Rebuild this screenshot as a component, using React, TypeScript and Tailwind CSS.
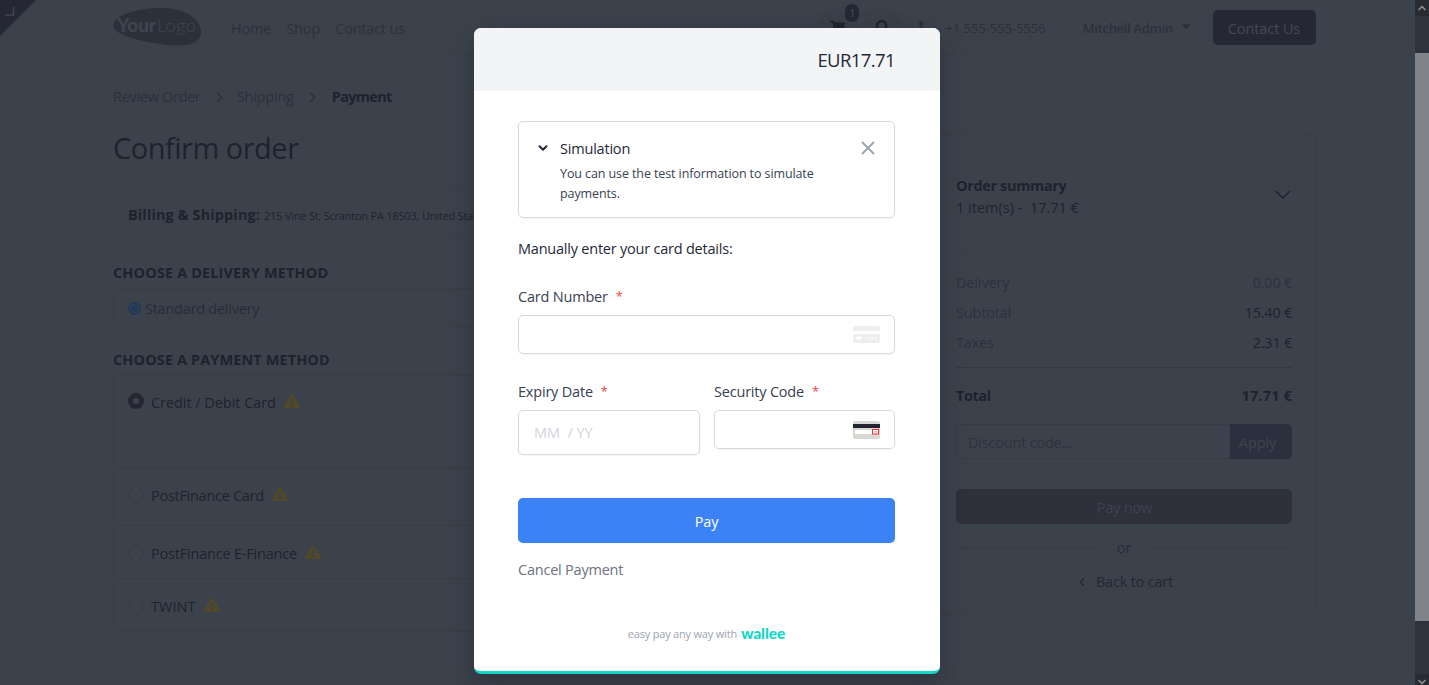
import { ChevronDown, ChevronLeft, ChevronRight, ChevronUp, X } from 'lucide-react';
import { FaCaretDown, FaExclamationTriangle, FaPhoneAlt, FaSearch, FaShoppingCart } from 'react-icons/fa';

interface PaymentMethod {
  name: string;
  nameClass: string;
  rowClass: string;
  selected?: boolean;
}

const paymentMethods: PaymentMethod[] = [
  { name: 'Credit / Debit Card', nameClass: 'tracking-[-0.05px]', rowClass: 'h-[92px] pt-[13px]', selected: true },
  { name: 'PostFinance Card', nameClass: 'tracking-[-0.28px]', rowClass: 'h-[57px] pt-[13px] border-t' },
  { name: 'PostFinance E-Finance', nameClass: 'tracking-[-0.2px]', rowClass: 'h-[53px] pt-[14px] border-t' },
  { name: 'TWINT', nameClass: 'tracking-[0.05px]', rowClass: 'h-[53px] pt-[14px] border-t' },
];

const totals = [
  { label: 'Delivery', value: '0.00 €', valueClass: 'text-[#2b313c]' },
  { label: 'Subtotal', value: '15.40 €', valueClass: 'text-[#1c222e]' },
  { label: 'Taxes', value: '2.31 €', valueClass: 'text-[#1c222e]' },
];

function Logo() {
  return (
    <svg className="w-[89px] h-[38px] shrink-0" viewBox="0 0 89 38">
      <path
        d="M0 17 C1 7 24 0 49 0 C72 0 88 11 88 24 C88 33 79 37.5 65 37.5 C42 37 0 29 0 17 Z"
        fill="#2b313b"
      />
      <text x="4" y="24" fontFamily="Lato" fontWeight="900" fontSize="18" textLength="39" lengthAdjust="spacingAndGlyphs" fill="#3f454f">
        Your
      </text>
      <text x="44" y="24" fontFamily="Lato" fontWeight="300" fontSize="18" textLength="39" lengthAdjust="spacingAndGlyphs" fill="#3f454f">
        Logo
      </text>
    </svg>
  );
}

function Navbar() {
  return (
    <header className="h-[55px] border-b border-[#393e48] pl-[113px] pr-[99px] flex items-center justify-between text-[#2b313b]">
      <div className="flex items-center">
        <Logo />
        <nav className="flex items-center ml-[29px] gap-[15px] pt-[3px]">
          <span className="tracking-[-0.2px]">Home</span>
          <span className="tracking-[-0.1px]">Shop</span>
          <span className="tracking-[-0.2px]">Contact us</span>
        </nav>
      </div>
      <div className="flex items-center">
        <div className="relative size-10 rounded-full bg-[#3a4049] flex items-center justify-center text-[#1d232e]">
          <FaShoppingCart className="size-[15px]" />
          <span className="absolute left-[28px] -top-[3px] w-[14px] h-[18px] rounded-full bg-[#262734] text-[#484d56] text-[11px] leading-[18px] text-center">
            1
          </span>
        </div>
        <div className="size-10 ml-[6px] rounded-full bg-[#3a4049] flex items-center justify-center text-[#1d232e]">
          <FaSearch className="size-[14px]" />
        </div>
        <FaPhoneAlt className="size-3 ml-[16px]" />
        <span className="ml-[14px] text-[13px] pt-[3px] tracking-[-0.05px]">+1 555-555-5556</span>
        <span className="ml-[37px] text-[13px] font-semibold pt-[3px] tracking-[-0.3px]">Mitchell Admin</span>
        <FaCaretDown className="size-[14px] ml-[6px] mb-[2px]" />
        <button className="ml-[20px] w-[103px] h-[35px] rounded-[5px] bg-[#262734] text-[#454a55] tracking-[-0.1px] pt-[3px] pr-[1px]">
          Contact Us
        </button>
      </div>
    </header>
  );
}

function Radio({ selected }: { selected?: boolean }) {
  return selected ? (
    <span className="size-4 rounded-full border-[5px] border-[#262633] bg-[#3c424c] shrink-0 mb-[2px]" />
  ) : (
    <span className="size-4 rounded-full border border-[#373d47] shrink-0 mb-[1px]" />
  );
}

function Checkout() {
  return (
    <div className="w-[795px] text-[#1c222e]">
      <div className="flex items-center h-[22px] mt-[31px] text-[#2a303b]">
        <span className="tracking-[-0.3px]">Review Order</span>
        <ChevronRight className="size-[17px] ml-[10px] mr-[9px]" strokeWidth={1.8} />
        <span className="tracking-[-0.2px]">Shipping</span>
        <ChevronRight className="size-[17px] ml-[10px] mr-[11px]" strokeWidth={1.8} />
        <span className="font-bold text-[#1c222e] tracking-[-0.7px]">Payment</span>
      </div>
      <h1 className="text-[29px] leading-[40px] mt-[20px] tracking-[-0.5px]">Confirm order</h1>

      <div className="mt-[18px] h-[54px] border border-[#393f49] rounded-[5px] px-[14px] flex items-baseline pt-[17px]">
        <span className="font-bold tracking-[0.1px] leading-[22px]">Billing &amp; Shipping:</span>
        <span className="ml-1 text-[11px] tracking-[-0.22px]">215 Vine St, Scranton PA 18503, United States</span>
      </div>

      <h2 className="font-bold text-[14.5px] leading-[20px] mt-[23px] tracking-[0.12px]">CHOOSE A DELIVERY METHOD</h2>
      <div className="mt-[5px] h-[39px] border border-[#383d47] rounded-[5px] px-[14px] flex items-center pt-px">
        <span className="size-[13px] rounded-full border-2 border-[#23395b] p-[1px] flex">
          <span className="flex-1 rounded-full bg-[#23395b]" />
        </span>
        <span className="ml-1 pt-px text-[#262c37] tracking-[-0.25px]">Standard delivery</span>
      </div>

      <h2 className="font-bold text-[14.5px] leading-[20px] mt-[23px] tracking-[0.1px]">CHOOSE A PAYMENT METHOD</h2>
      <div className="mt-[5px] border border-[#383d47] rounded-[5px]">
        {paymentMethods.map((m) => (
          <div key={m.name} className={`${m.rowClass} border-[#373c46] px-[14px]`}>
            <div className="flex items-center h-[26px]">
              <Radio selected={m.selected} />
              <span className={`ml-[7px] pt-[2px] ${m.nameClass}`}>{m.name}</span>
              <FaExclamationTriangle className="size-4 ml-[8px] mb-[2px] text-[#504829]" />
            </div>
          </div>
        ))}
      </div>
    </div>
  );
}

function OrderSummary() {
  return (
    <aside className="w-[384px] h-[481px] mt-[79px] border border-[#383d47] rounded-[6px] px-[23px] text-[#1c222e] flex flex-col">
      <div className="mt-[39px] flex items-center justify-between">
        <div>
          <div className="font-bold leading-[23px] tracking-[-0.35px]">Order summary</div>
          <div className="leading-[22px] whitespace-pre">{'1 item(s) -  17.71 €'}</div>
        </div>
        <svg className="w-4 h-[9px] mt-[-5px] mr-[1px]" viewBox="0 0 16 9">
          <path d="M0.700 0.700L8 8L15.300 0.700" fill="none" stroke="currentColor" strokeWidth="1.3" />
        </svg>
      </div>
      <div className="mt-[35px] border-t border-[#393f49] pt-[13px]">
        {totals.map((row) => (
          <div key={row.label} className="flex items-center justify-between h-[30px]">
            <span className="text-[#2b313c] tracking-[-0.15px]">{row.label}</span>
            <span className={`${row.valueClass} tracking-[-0.25px]`}>{row.value}</span>
          </div>
        ))}
      </div>
      <div className="mt-[9px] border-t border-[#333943] flex items-center justify-between h-[57px] font-bold">
        <span className="tracking-[-0.4px]">Total</span>
        <span className="tracking-[0.15px]">17.71 €</span>
      </div>
      <div className="h-[35px] flex">
        <div className="flex-1 border border-r-0 border-[#363c46] rounded-l-[5px] pl-[11px] flex items-center text-[#2c323d] tracking-[-0.2px] pt-[2px]">
          Discount code...
        </div>
        <button className="w-[62px] rounded-r-[5px] bg-[#2c2f3d] text-[#3f4450] pr-[7px] pt-[2px] tracking-[-0.1px]">Apply</button>
      </div>
      <button className="mt-[30px] h-[35px] shrink-0 rounded-[5px] bg-[#2e303c] text-[#3e434e] pt-[2px] pl-px tracking-[-0.2px]">Pay now</button>
      <div className="mt-[12px] h-[24px] flex items-center gap-[15px] text-[#262c37]">
        <span className="flex-1 border-t border-[#373d47]" />
        <span>or</span>
        <span className="flex-1 border-t border-[#373d47]" />
      </div>
      <div className="mt-[10px] h-[24px] flex items-center justify-center text-[#262633]">
        <ChevronLeft className="size-[14px] mr-[7px]" strokeWidth={2} />
        <span className="tracking-[-0.2px]">Back to cart</span>
      </div>
    </aside>
  );
}

function Scrollbar() {
  return (
    <div className="w-[14px] h-[685px] flex flex-col shrink-0 text-[#8a8c90]">
      <div className="h-4 bg-[#292b32] flex items-center justify-center">
        <ChevronUp className="size-3 shrink-0" strokeWidth={3.5} />
      </div>
      <div className="h-[37px] bg-[#2f333d]" />
      <div className="flex-1 bg-[#808388]" />
      <div className="h-[53px] bg-[#2f333d]" />
      <div className="h-[11px] bg-[#292b32] flex justify-center overflow-hidden">
        <ChevronDown className="size-3 mt-[2px] shrink-0" strokeWidth={3.5} />
      </div>
    </div>
  );
}

function FieldLabel({ text }: { text: string }) {
  return (
    <label className="flex items-center h-[22px] text-[#374151] tracking-[-0.2px]">
      {text}
      <span className="ml-[8px] text-[13px] text-[#ef4444]">*</span>
    </label>
  );
}

function CardIcon() {
  return (
    <svg className="w-[27px] h-[17px]" viewBox="0 0 27 17" fill="#eeeeee">
      <path d="M2 0h23a2 2 0 0 1 2 2v3H0V2a2 2 0 0 1 2-2Z" />
      <path d="M0 8h27v7a2 2 0 0 1-2 2H2a2 2 0 0 1-2-2Z" />
      <rect x="3.5" y="10.500" width="5" height="3" fill="#fff" />
      <circle cx="16" cy="12.500" r="1" fill="#fff" />
      <circle cx="19.300" cy="12.500" r="1" fill="#fff" />
      <circle cx="22.600" cy="12.500" r="1" fill="#fff" />
    </svg>
  );
}

function CvcIcon() {
  return (
    <svg className="w-[27px] h-[18px]" viewBox="0 0 27 18">
      <rect width="27" height="18" rx="2" fill="#d9d8d4" />
      <rect y="3" width="27" height="4" fill="#1f2430" />
      <rect x="2" y="9" width="18" height="4" fill="#fff" />
      <rect x="19.500" y="8.500" width="6" height="4.500" fill="#fff" stroke="#f32b2b" />
      <path d="M21 10.800h3" stroke="#ee9a9a" />
    </svg>
  );
}

function PaymentModal() {
  return (
    <div className="absolute left-[474px] top-[28px] w-[466px] h-[646px] rounded-[7px] bg-white border-b-[3px] border-[#12d3c6] overflow-hidden shadow-[0_10px_25px_rgba(20,24,34,0.35)] text-[#1f2937]">
      <div className="h-[63px] bg-[#f3f4f6] flex items-center justify-end px-[45px] text-[18.5px] tracking-[-0.6px]">
        EUR17.71
      </div>
      <div className="pl-[44px] pr-[45px] pt-[30px]">
        <div className="h-[97px] border border-[#d6d9de] rounded-[5px] shadow-xs flex pl-[17px] pr-[16px]">
          <ChevronDown className="size-[14px] mt-[19px] shrink-0" strokeWidth={3.5} />
          <div className="ml-[10px] flex-1 pt-[16px]">
            <div className="leading-[22px] tracking-[-0.2px]">Simulation</div>
            <div className="mt-[4px] text-[12.5px] leading-[19.5px] text-[#374151] tracking-[-0.1px] w-[270px]">
              You can use the test information to simulate payments.
            </div>
          </div>
          <X className="size-[22px] mt-[15px] -mr-px shrink-0 text-[#9ca3af]" strokeWidth={2} />
        </div>
        <p className="mt-[20px] leading-[22px] tracking-[-0.22px]">Manually enter your card details:</p>
        <div className="mt-[26px]">
          <FieldLabel text="Card Number" />
          <div className="mt-[7px] h-[39px] border border-[#d6d9de] rounded-[5px] shadow-xs flex items-center justify-end pr-[14px]">
            <CardIcon />
          </div>
        </div>
        <div className="mt-[27px] flex items-start gap-[14px]">
          <div className="w-[182px]">
            <FieldLabel text="Expiry Date" />
            <div className="mt-[7px] h-[45px] border border-[#d6d9de] rounded-[5px] shadow-xs flex items-center pl-[15px] pt-px text-[#d1d5db] text-[14.5px] whitespace-pre tracking-[-0.05px]">
              {'MM  / YY'}
            </div>
          </div>
          <div className="flex-1">
            <FieldLabel text="Security Code" />
            <div className="mt-[7px] h-[39px] border border-[#d6d9de] rounded-[5px] shadow-xs flex items-center justify-end pr-[14px]">
              <CvcIcon />
            </div>
          </div>
        </div>
        <button className="mt-[43px] w-full h-[45px] rounded-[5px] bg-[#3b82f6] text-white shadow-xs tracking-[-0.2px] pt-[2px]">Pay</button>
        <div className="mt-[16px] leading-[22px] text-[#6b7280] tracking-[-0.22px]">Cancel Payment</div>
        <div className="mt-[40px] h-[24px] flex items-center justify-center text-[11px] text-[#9ca3af]">
          <span className="pt-[3px] tracking-[-0.2px]">easy pay any way with</span>
          <span className="ml-1 font-['Lato',sans-serif] font-black text-[15.5px] leading-[20px] text-[#12d8cb] tracking-[-0.1px]">wallee</span>
        </div>
      </div>
    </div>
  );
}

export default function App() {
  return (
    <div className="relative w-[1429px] h-[685px] overflow-hidden flex bg-[#3c424c] font-['Open_Sans',sans-serif] text-[14.5px]">
      <div className="flex-1">
        <Navbar />
        <main className="pl-[113px] pr-[99px] flex items-start justify-between">
          <Checkout />
          <OrderSummary />
        </main>
      </div>
      <Scrollbar />
      <svg className="absolute left-0 top-0 size-9" viewBox="0 0 36 36">
        <path d="M0 0H36L0 36Z" fill="#262734" />
        <path d="M5 15H13.500V7" fill="none" stroke="#3f4650" strokeWidth="1.5" />
      </svg>
      <PaymentModal />
    </div>
  );
}
